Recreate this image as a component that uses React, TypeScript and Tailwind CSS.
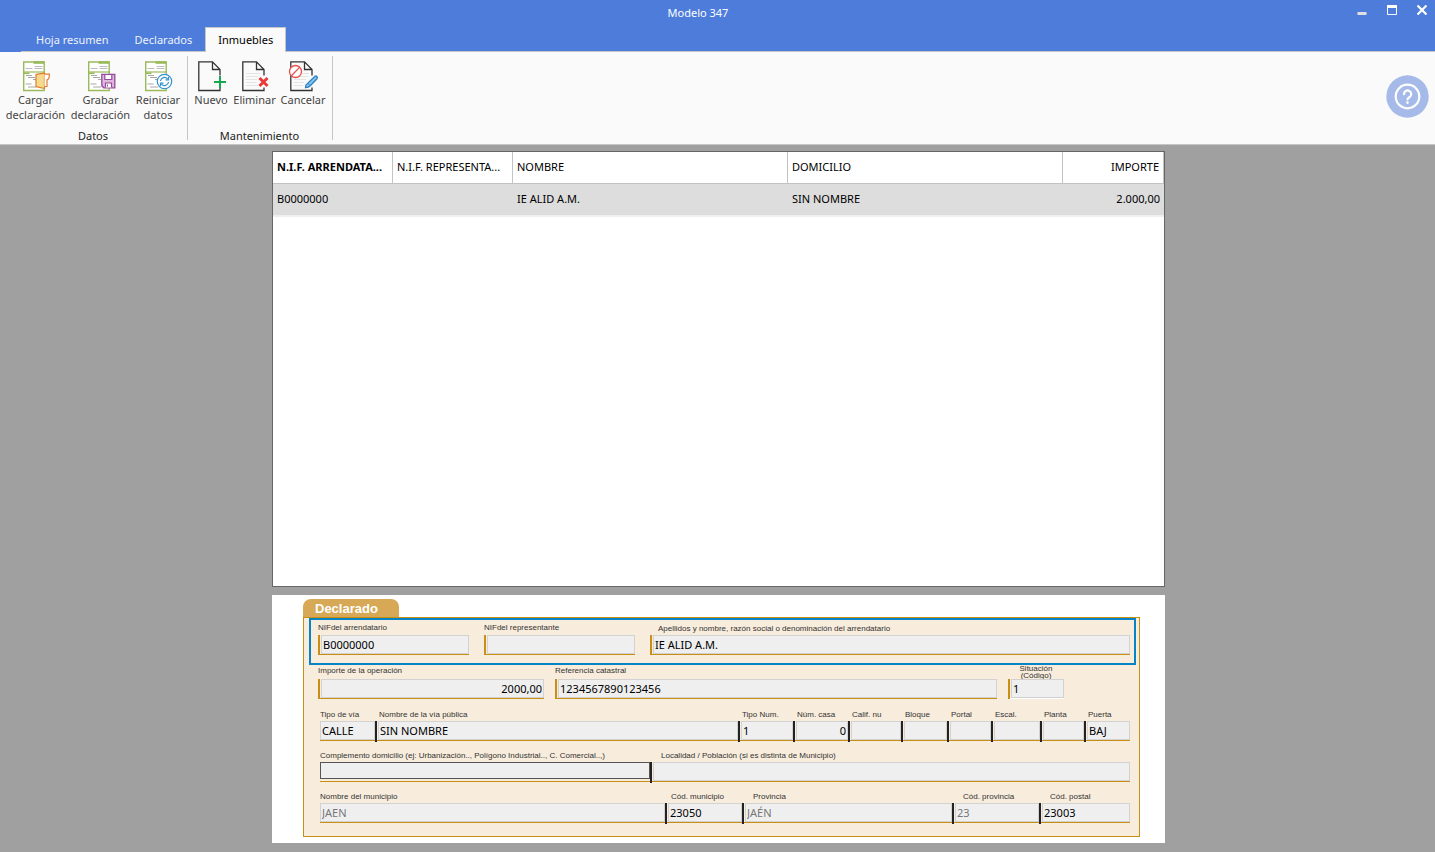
import type { ReactNode } from "react";

function SheetBase() {
  return (
    <g fill="none">
      <path d="M2.700 1h20.500v28.500H2.700z" fill="#fff" stroke="#9aba5a" strokeWidth="1.400" />
      <path d="M12.500 1.500h11" stroke="#9aba5a" strokeWidth="2.600" />
      <path d="M2.500 11h21" stroke="#9aba5a" strokeWidth="1.200" />
      <path d="M2.500 12.300h6" stroke="#9aba5a" strokeWidth="1.600" />
      <path d="M13.500 5.500h8M4.500 7.500h7M13.500 7.500h8" stroke="#bdbdbd" />
      <path d="M5 14.500h6M7 16.500h7M12 18.500h4M4.500 23h6M7 26h8" stroke="#a8a8a8" />
    </g>
  );
}

function Icon({ children }: { children: ReactNode }) {
  return (
    <svg viewBox="0 0 30 31" className="h-[31px] w-[30px] shrink-0 overflow-visible" aria-hidden="true">
      {children}
    </svg>
  );
}

function LoadIcon() {
  return (
    <Icon>
      <SheetBase />
      <path d="M15 13.300l8.500-1.200v15.400l-8.500-1.800z" fill="#f6d98d" stroke="#e27d2c" strokeWidth="1.200" strokeLinejoin="round" />
      <path d="M23.500 13.200h5l-.6 4.300-1.900 1.500v6.500h-2.500" fill="#fff" stroke="#e27d2c" strokeWidth="1.200" strokeLinejoin="round" />
    </Icon>
  );
}

function SaveIcon() {
  return (
    <Icon>
      <SheetBase />
      <path d="M15.800 13.300h13v13.500H17.800l-2-2z" fill="#dcb9dd" stroke="#954a9b" strokeWidth="1.300" />
      <path d="M18.800 13.500h7v5h-7zM19.500 26.500v-4.500h6v4.500" fill="#fff" stroke="#954a9b" strokeWidth="1.200" />
      <path d="M21.500 23.500v2" stroke="#954a9b" />
    </Icon>
  );
}

function ResetIcon() {
  return (
    <Icon>
      <SheetBase />
      <circle cx="21.500" cy="20.500" r="7.200" fill="#fff" stroke="#3591cf" strokeWidth="1.200" />
      <path
        d="M17.500 20a4 4 0 0 1 7-2.200M25.500 21a4 4 0 0 1-7 2.200M25.500 15.800v3h-3M17.500 25.200v-3h3"
        fill="none"
        stroke="#3591cf"
        strokeWidth="1.200"
      />
    </Icon>
  );
}

function PageOutline() {
  return (
    <path
      d="M24 14.500V8.500L16.500.8H2.800v28.700H24v-3M16.500.8v7.700H24"
      fill="none"
      stroke="#333"
      strokeWidth="1.300"
    />
  );
}

function NewIcon() {
  return (
    <Icon>
      <PageOutline />
      <path d="M24 15v12M18 21h12" stroke="#18a84f" strokeWidth="2" />
    </Icon>
  );
}

function DeleteIcon() {
  return (
    <Icon>
      <PageOutline />
      <path d="M6 12.500h14M6 15.500h12M6 18.500h11M6 21.500h11M6 24.500h12" stroke="#e4e4e4" />
      <path d="M19.500 17l8 8M27.500 17l-8 8" stroke="#ea3b39" strokeWidth="3" />
    </Icon>
  );
}

function CancelIcon() {
  return (
    <Icon>
      <PageOutline />
      <path d="M10 12.500h11M8 15.500h12M6 18.500h12M6 21.500h10M6 24.500h9" stroke="#e4e4e4" />
      <circle cx="7.500" cy="10.500" r="6" fill="#fff" stroke="#e8504c" strokeWidth="1.300" />
      <path d="M3.500 14.700l8-8.300" stroke="#e8504c" strokeWidth="1.300" />
      <path
        d="M17.500 26.500c0-2 .6-3.200 2-4l7.300-7c1.300-1.200 3.500.6 2.200 2.200l-7 7.300c-1 1.200-2.500 1.500-4.500 1.500z"
        fill="#8dc3e8"
        stroke="#2a84c4"
        strokeWidth="1.300"
      />
      <path d="M19.800 22.300l2.400 2.400" stroke="#2a84c4" />
    </Icon>
  );
}

interface RibbonButtonProps {
  icon: ReactNode;
  label: string;
  width: string;
}

function RibbonButton({ icon, label, width }: RibbonButtonProps) {
  return (
    <button type="button" className={`flex flex-col items-center text-center leading-[15px] text-[#444] ${width}`}>
      {icon}
      <span>{label}</span>
    </button>
  );
}

interface RibbonGroupProps {
  title: string;
  className: string;
  children: ReactNode;
}

function RibbonGroup({ title, className, children }: RibbonGroupProps) {
  return (
    <section className={`flex flex-col justify-between border-r border-[#c6c6c6] ${className}`}>
      <div className="flex items-start pt-[5px]">{children}</div>
      <h2 className="text-center leading-[9px] text-[#222]">{title}</h2>
    </section>
  );
}

interface FieldProps {
  id: string;
  label: string;
  value?: string;
  variant?: "gold" | "black" | "none";
  align?: "left" | "right";
  muted?: boolean;
  outlined?: boolean;
  underline?: boolean;
  labelClass?: string;
}

const bars = {
  gold: "h-5 w-0.5 bg-[#c98f14]",
  black: "h-[21px] w-0.5 bg-[#222]",
  none: "w-0",
};

function Field({
  id,
  label,
  value = "",
  variant = "black",
  align = "left",
  muted = false,
  outlined = false,
  underline = true,
  labelClass = "pl-1",
}: FieldProps) {
  return (
    <div className="flex min-w-0 flex-col">
      <label htmlFor={id} className={`block whitespace-nowrap text-[#333] ${labelClass}`}>
        {label}
      </label>
      <div className={`flex h-5 border-b ${underline ? "border-[#c98f14]" : "border-white"}`}>
        <span className={`shrink-0 ${bars[variant]}`} />
        <input
          id={id}
          defaultValue={value}
          className={`min-w-0 flex-1 rounded-none border bg-[#efefef] px-px font-[Noto_Sans,sans-serif] text-[11px] outline-none ${
            outlined ? "h-[17px] border-[#555]" : "h-[19px] border-[#d2d2d2]"
          } ${variant === "none" ? "" : "ml-px"} ${align === "right" ? "text-right" : ""} ${muted ? "text-[#777]" : "text-black"}`}
        />
      </div>
    </div>
  );
}

const headerCell = "h-8 truncate border-r border-b border-[#c3c3c3] px-1 font-normal";

export default function App() {
  return (
    <div className="flex min-h-screen flex-col bg-[#a0a0a0] font-[Noto_Sans,sans-serif] text-[11px] text-black">
      <header className="bg-[#4d7cdb] text-white">
        <div className="flex h-[26px] items-center">
          <span className="w-[45px]" />
          <h1 className="flex-1 text-center">Modelo 347</h1>
          <div className="flex h-5 w-[84px] items-center justify-between self-start pr-2 pl-1.5">
            <button type="button" aria-label="Minimizar">
              <svg viewBox="0 0 10 10" className="size-2.5">
                <path d="M.5 8.500h9" stroke="#e0e0e0" strokeWidth="3" />
              </svg>
            </button>
            <button type="button" aria-label="Maximizar">
              <svg viewBox="0 0 10 10" className="size-2.5">
                <path d="M.5 1h9v8.500h-9zM0 2h10" fill="none" stroke="#fff" />
                <path d="M0 1.500h10" stroke="#fff" strokeWidth="3" />
              </svg>
            </button>
            <button type="button" aria-label="Cerrar">
              <svg viewBox="0 0 10 10" className="size-2.5">
                <path d="M.500.500l9 9M9.500.500l-9 9" stroke="#fff" strokeWidth="2.200" />
              </svg>
            </button>
          </div>
        </div>
        <nav className="flex h-[26px] items-stretch pl-[21px]">
          <button type="button" className="border-b border-[#c6c6c6] pt-[3px] pr-[13px] pl-[15px] text-[#eef2fc]">
            Hoja resumen
          </button>
          <button type="button" className="border-b border-[#c6c6c6] px-[13px] pt-[3px] text-[#eef2fc]">
            Declarados
          </button>
          <button type="button" className="mt-px border-t border-r border-l border-[#c6c6c6] bg-[#fafafa] px-3 text-black">
            Inmuebles
          </button>
          <span className="flex-1 border-b border-[#c6c6c6]" />
        </nav>
      </header>

      <div className="flex items-center justify-between border-b border-[#c6c6c6] bg-[#fafafa] pr-1.5">
        <div className="flex h-[92px] pt-1 pb-1">
          <RibbonGroup title="Datos" className="pl-[3px] pr-1">
            <RibbonButton icon={<LoadIcon />} label="Cargar declaración" width="w-[65px]" />
            <RibbonButton icon={<SaveIcon />} label="Grabar declaración" width="w-[65px]" />
            <RibbonButton icon={<ResetIcon />} label="Reiniciar datos" width="w-[50px]" />
          </RibbonGroup>
          <RibbonGroup title="Mantenimiento" className="pl-0.5 pr-[3px]">
            <RibbonButton icon={<NewIcon />} label="Nuevo" width="w-[42px]" />
            <RibbonButton icon={<DeleteIcon />} label="Eliminar" width="w-[45px]" />
            <RibbonButton icon={<CancelIcon />} label="Cancelar" width="w-[52px]" />
          </RibbonGroup>
        </div>
        <button type="button" aria-label="Ayuda" className="pb-1">
          <svg viewBox="0 0 43 43" className="size-[43px]">
            <circle cx="21.500" cy="21.500" r="21.200" fill="#a6baea" />
            <circle cx="21.500" cy="21.500" r="11.800" fill="none" stroke="#fff" strokeWidth="2.200" />
            <path
              d="M18 19.200a3.600 3.600 0 1 1 5.600 2.900c-1.300.8-2.100 1.200-2.100 2.300"
              fill="none"
              stroke="#fff"
              strokeWidth="2.200"
              strokeLinecap="round"
            />
            <circle cx="21.500" cy="27.600" r="1.300" fill="#fff" />
          </svg>
        </button>
      </div>

      <main className="mx-auto flex w-full max-w-[895px] flex-1 flex-col gap-2 pt-1.5 pb-[9px] pl-0.5">
        <section className="min-h-[200px] flex-1 border border-[#666] bg-white">
          <table className="w-full table-fixed border-separate border-spacing-0 text-left">
            <colgroup>
              <col className="w-[120px]" />
              <col className="w-[120px]" />
              <col />
              <col />
              <col className="w-[101px]" />
            </colgroup>
            <thead>
              <tr>
                <th className="h-8 truncate border-r border-b border-[#c3c3c3] px-1 font-bold">N.I.F. ARRENDATA...</th>
                <th className={headerCell}>N.I.F. REPRESENTA...</th>
                <th className={headerCell}>NOMBRE</th>
                <th className={headerCell}>DOMICILIO</th>
                <th className={`text-right ${headerCell}`}>IMPORTE</th>
              </tr>
            </thead>
            <tbody>
              <tr className="bg-[#ddd]">
                <td className="h-[33px] border-b-2 border-[#efefef] px-1">B0000000</td>
                <td className="border-b-2 border-[#efefef] px-1" />
                <td className="border-b-2 border-[#efefef] px-1">IE ALID A.M.</td>
                <td className="border-b-2 border-[#efefef] px-1">SIN NOMBRE</td>
                <td className="border-b-2 border-[#efefef] px-1 text-right">2.000,00</td>
              </tr>
            </tbody>
          </table>
        </section>

        <section className="bg-white pt-1 pr-[25px] pb-1.5 pl-[31px]">
          <h2 className="h-[18px] w-24 rounded-t-lg bg-[#d7a956] pl-3 font-[Liberation_Sans,sans-serif] text-[13px] leading-5 font-bold text-white">
            Declarado
          </h2>
          <form className="border border-[#c98f14] bg-[#f8ecdc] px-[3px] pb-[13px] font-[Liberation_Sans,sans-serif] text-[8px] leading-3">
            <div className="ml-0.5 grid grid-cols-[151fr_151fr_480fr] items-end gap-x-[15px] border-2 border-[#0784c7] pt-0.5 pr-1 pb-2 pl-[7px]">
              <Field id="nif-arr" label="NIFdel arrendatario" value="B0000000" variant="gold" labelClass="pb-px" />
              <Field id="nif-rep" label="NIFdel representante" variant="gold" labelClass="pb-px" />
              <Field
                id="nombre"
                label="Apellidos y nombre, razón social o denominación del arrendatario"
                value="IE ALID A.M."
                variant="gold"
                labelClass="pl-2"
              />
            </div>
            <div className="grid grid-cols-[226fr_442fr_56fr_61fr] items-end gap-x-[11px] pl-[11px]">
              <Field id="importe" label="Importe de la operación" value="2000,00" variant="gold" align="right" labelClass="pb-0.5" />
              <Field id="ref" label="Referencia catastral" value="1234567890123456" variant="gold" labelClass="pb-0.5" />
              <Field id="situacion" label="Situación (Código)" value="1" variant="gold" underline={false} labelClass="whitespace-normal! h-[14px] px-1 leading-[7px] text-center" />
            </div>
            <div className="flex flex-col gap-[9px] pt-2.5 pr-1.5 pl-[13px]">
              <div className="grid grid-cols-[55fr_363fr_55fr_55fr_53fr_46fr_44fr_49fr_44fr_46fr]">
                <Field id="tipo-via" label="Tipo de vía" value="CALLE" variant="none" labelClass="" />
                <Field id="via" label="Nombre de la vía pública" value="SIN NOMBRE" />
                <Field id="tipo-num" label="Tipo Num." value="1" />
                <Field id="num-casa" label="Núm. casa" value="0" align="right" />
                <Field id="calif" label="Calif. nu" />
                <Field id="bloque" label="Bloque" />
                <Field id="portal" label="Portal" />
                <Field id="escal" label="Escal." />
                <Field id="planta" label="Planta" />
                <Field id="puerta" label="Puerta" value="BAJ" />
              </div>
              <div className="grid grid-cols-[330fr_480fr]">
                <Field
                  id="complemento"
                  label="Complemento domicilio (ej: Urbanización.., Polígono Industrial.., C. Comercial..,)"
                  variant="none"
                  outlined
                  labelClass=""
                />
                <Field id="localidad" label="Localidad / Población (si es distinta de Municipio)" labelClass="pl-[11px]" />
              </div>
              <div className="grid grid-cols-[345fr_77fr_210fr_87fr_91fr]">
                <Field id="municipio" label="Nombre del municipio" value="JAEN" variant="none" muted labelClass="" />
                <Field id="cod-mun" label="Cód. municipio" value="23050" labelClass="pl-1.5" />
                <Field id="provincia" label="Provincia" value="JAÉN" muted labelClass="pl-[11px]" />
                <Field id="cod-prov" label="Cód. provincia" value="23" muted labelClass="pl-[11px]" />
                <Field id="cod-postal" label="Cód. postal" value="23003" labelClass="pl-[11px]" />
              </div>
            </div>
          </form>
        </section>
      </main>
    </div>
  );
}
